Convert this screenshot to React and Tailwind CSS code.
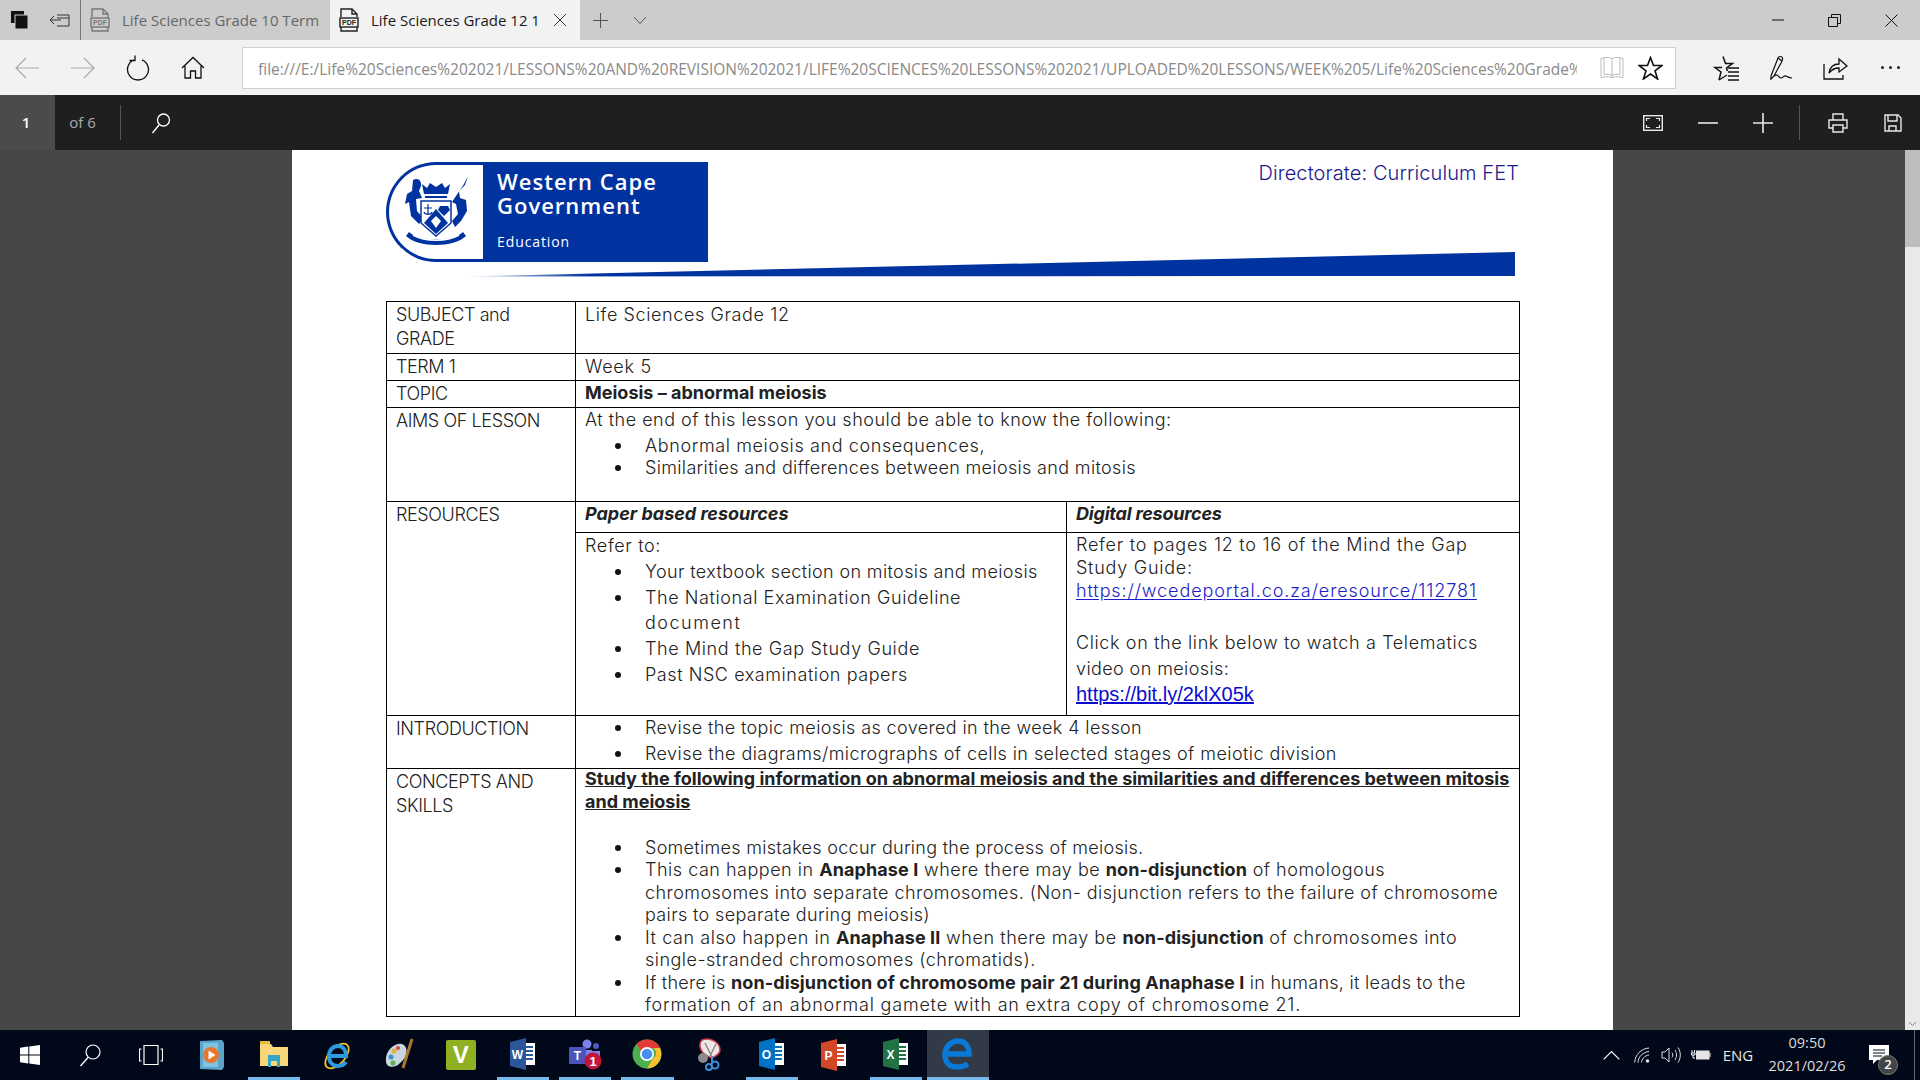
const Ico = ({ w = 24, h = 24, className = '', children }) => (
  <svg width={w} height={h} viewBox={`0 0 ${w} ${h}`} fill="none" stroke="currentColor" strokeWidth="1" className={className}>
    {children}
  </svg>
);

const PdfIcon = ({ className }) => (
  <svg width="20" height="24" viewBox="0 0 20 24" className={className} fill="none" stroke="currentColor" strokeWidth="1.4">
    <path d="M2 9V1h11l5 5v3M2 19v4h16v-4M13 1v5h5" />
    <rect x="1" y="10" width="18" height="9" fill="none" />
    <text x="10" y="17.2" textAnchor="middle" fontSize="7" fontWeight="700" fill="currentColor" stroke="none" fontFamily="Liberation Sans, sans-serif">PDF</text>
  </svg>
);

function TitleBar() {
  return (
    <div className="h-10 bg-[#cccccc] flex items-center text-[15px] font-['Open_Sans',sans-serif]">
      <div className="w-10 flex justify-center">
        <svg width="20" height="20" viewBox="0 0 20 20" fill="#111">
          <rect x="1" y="1" width="13" height="12" />
          <rect x="5" y="5" width="13" height="14" stroke="#ccc" strokeWidth="1" />
        </svg>
      </div>
      <div className="w-10 flex justify-center text-[#333]">
        <Ico w={22} h={20}>
          <path d="M8 5h12v11H8M8 8h12M1 10h11M5 6l-4 4 4 4" />
        </Ico>
      </div>
      <div className="h-10 w-[250px] border-l border-[#777] flex items-center text-[#666]">
        <PdfIcon className="ml-[9px] text-[#777]" />
        <span className="ml-[12px] whitespace-nowrap">Life Sciences Grade 10 Term</span>
      </div>
      <div className="h-10 w-[250px] bg-[#f2f2f2] flex items-center text-[#1a1a1a]">
        <PdfIcon className="ml-[9px] text-[#222]" />
        <span className="ml-[12px] w-[182px] whitespace-nowrap overflow-hidden">Life Sciences Grade 12 1</span>
        <Ico w={14} h={14} className="text-[#333]">
          <path d="M1 1l12 12M13 1L1 13" />
        </Ico>
      </div>
      <div className="w-10 flex justify-center text-[#555]">
        <Ico w={17} h={17}>
          <path d="M8.5 1v15M1 8.500h15" />
        </Ico>
      </div>
      <div className="w-10 flex justify-center text-[#555]">
        <Ico w={14} h={9}>
          <path d="M1 1l6 6.500L13 1" />
        </Ico>
      </div>
      <div className="flex-1" />
      <div className="w-[57px] flex justify-center text-[#111]">
        <Ico w={12} h={2}>
          <path d="M0 1h12" />
        </Ico>
      </div>
      <div className="w-[57px] flex justify-center text-[#111]">
        <Ico w={13} h={13}>
          <path d="M.5 3.500h9v9h-9zM3.500 3.500v-3h9v9h-3" />
        </Ico>
      </div>
      <div className="w-[57px] flex justify-center text-[#111]">
        <Ico w={13} h={13}>
          <path d="M.5.5l12 12M12.500.5l-12 12" />
        </Ico>
      </div>
    </div>
  );
}

function NavBar() {
  return (
    <div className="h-[55px] bg-[#f2f2f2] flex items-center">
      <div className="w-[55px] flex justify-center text-[#aaa]">
        <Ico w={25} h={22}>
          <path d="M24 11H1M11 1L1 11l10 10" strokeWidth="1.2" />
        </Ico>
      </div>
      <div className="w-[55px] flex justify-center text-[#aaa]">
        <Ico w={25} h={22}>
          <path d="M1 11h23M14 1l10 10-10 10" strokeWidth="1.2" />
        </Ico>
      </div>
      <div className="w-[55px] flex justify-center text-[#111]">
        <Ico w={24} h={26}>
          <path d="M8 4.800a10.500 10.500 0 1 0 8 0M9 .5v5H3.500" strokeWidth="1.3" />
        </Ico>
      </div>
      <div className="w-[55px] flex justify-center text-[#111]">
        <Ico w={24} h={24}>
          <path d="M1 12L12 1.500 23 12M4 10v12h5.500v-7h5v7H20V10" strokeWidth="1.3" />
        </Ico>
      </div>
      <div className="ml-[22px] h-[42px] w-[1434px] shrink-0 bg-white border border-[#cfcfcf] flex items-center text-[#8a8a8a] font-['Open_Sans',sans-serif] text-[15.500px]">
        <div className="ml-[15px] w-[1319px] shrink-0 overflow-hidden whitespace-nowrap leading-[30px] pt-[2px]">
          file:///E:/Life%20Sciences%202021/LESSONS%20AND%20REVISION%202021/LIFE%20SCIENCES%20LESSONS%202021/UPLOADED%20LESSONS/WEEK%205/Life%20Sciences%20Grade%2012
        </div>
        <div className="ml-[23px] text-[#bbb]">
          <Ico w={24} h={24}>
            <path d="M1 2.500c4-1.500 8-1.500 11 0 3-1.500 7-1.500 11 0v19c-4-1-8-1-11 0-3-1-7-1-11 0zM12 2.500v19M4 2v16.500c3-.5 6-.5 8 1 2-1.500 5-1.500 8-1V2" />
          </Ico>
        </div>
        <div className="ml-[14px] text-[#111]">
          <Ico w={25} h={24}>
            <path d="M12.500 1.500l3 8h8.500l-7 5.300 2.600 8.200-7.100-5-7.100 5 2.600-8.200-7-5.300h8.500z" strokeWidth="1.6" />
          </Ico>
        </div>
      </div>
      <div className="ml-[22px] w-[55px] flex justify-center text-[#111]">
        <Ico w={26} h={26}>
          <path d="M10 1.500l2.500 7h7l-6 4.500 1 3M6 25l2-8-6-4.500h7" strokeWidth="1.5" />
          <path d="M6 25l8-5M15 13h11M15 17h11M15 21h11M15 25h11" strokeWidth="1.3" />
        </Ico>
      </div>
      <div className="w-[55px] flex justify-center text-[#111]">
        <Ico w={24} h={26}>
          <path d="M2 21L9 3c1-2 4-2 4.500 0S13 6 12 8L5 21l-3 3zM9 3l4 3M1 24c3-1 5-5 7-4s2 3 4 3 3-3 5-2 3 2 6 2" strokeWidth="1.2" />
        </Ico>
      </div>
      <div className="w-[55px] flex justify-center text-[#111]">
        <Ico w={25} h={24}>
          <path d="M1 8v15h19v-4M6 17c1-6 5-9 10-9V3l8 7-8 6v-4c-4 0-7 1-10 5z" strokeWidth="1.3" />
        </Ico>
      </div>
      <div className="w-[55px] flex justify-center gap-[5px]">
        <span className="w-[3px] h-[3px] rounded-full bg-[#222]" />
        <span className="w-[3px] h-[3px] rounded-full bg-[#222]" />
        <span className="w-[3px] h-[3px] rounded-full bg-[#222]" />
      </div>
    </div>
  );
}

function PdfToolbar() {
  return (
    <div className="h-[55px] bg-[#1f1f1f] flex items-center text-white font-['Open_Sans',sans-serif]">
      <div className="w-[55px] h-full bg-[#4b4b4b] flex items-center justify-center text-[15px] font-semibold pr-[3px]">1</div>
      <div className="w-[66px] h-[35px] border-r border-[#555] flex items-center justify-center text-[15px] text-[#aaa] pr-[10px]">of 6</div>
      <div className="ml-[30px] text-white">
        <Ico w={20} h={22}>
          <circle cx="12.500" cy="8" r="6" strokeWidth="1.300" />
          <path d="M8 13L1.500 21" strokeWidth="1.400" />
        </Ico>
      </div>
      <div className="flex-1" />
      <div className="w-[55px] flex justify-center">
        <svg width="20" height="16" viewBox="0 0 20 16" fill="none" stroke="#e8e8e8">
          <rect x=".7" y=".7" width="18.600" height="14.600" strokeWidth="1.400" />
          <path d="M7 3.500H3.500V6M13 3.500h3.500V6M7 12.500H3.500V10M13 12.500h3.500V10" strokeWidth="1.200" />
        </svg>
      </div>
      <div className="w-[55px] flex justify-center">
        <Ico w={20} h={2}>
          <path d="M0 1h20" strokeWidth="1.600" stroke="#e8e8e8" />
        </Ico>
      </div>
      <div className="w-[55px] flex justify-center">
        <Ico w={20} h={20}>
          <path d="M0 10h20M10 0v20" strokeWidth="1.600" stroke="#e8e8e8" />
        </Ico>
      </div>
      <div className="w-[10px] h-[35px] border-r border-[#555]" />
      <div className="w-[10px]" />
      <div className="w-[55px] flex justify-center">
        <Ico w={20} h={20} className="text-[#e8e8e8]">
          <path d="M5 7V1h10v6M5 15H1V7h18v8h-4M5 12h10v7H5z" strokeWidth="1.400" />
        </Ico>
      </div>
      <div className="w-[55px] flex justify-center">
        <Ico w={18} h={18} className="text-[#e8e8e8]">
          <path d="M1 1h13l3 3v13H1zM4 1v6h9V1M5 17v-5h7v5" strokeWidth="1.400" />
        </Ico>
      </div>
    </div>
  );
}

function Crest() {
  return (
    <svg width="78" height="76" viewBox="0 0 78 76" fill="#0033a0">
      {/* crown */}
      <path d="M27 20l-2-10 5 4 3-5 6 4 6-4 3 5 5-4-2 10z" />
      <path d="M28 22h22v2H28z" />
      {/* lion left */}
      <path d="M16 6c5-3 9 1 8 6l-2 5 3 7-6 1 1 12 6 7-4 6-8-8-2-14-4 2 2-10 5-3z" />
      {/* gazelle right */}
      <path d="M71 2l-3 9-6 6 1 7 6 2 1 11-6 10-6 6-3-6 6-7-2-10-4-2 8-12 4-6z" />
      {/* shield */}
      <path d="M24 27h30v22L39 62 24 49z" fill="#fff" stroke="#0033a0" strokeWidth="1.500" />
      <path d="M39 35L27 49l12 11 12-11z" />
      <path d="M39 42l-5 5 5 7 5-7z" fill="#fff" />
      <path d="M31 30v11M27 34h8M27 38c1 3 7 3 8 0" stroke="#0033a0" fill="none" strokeWidth="1.200" />
      <path d="M43 32h8l2 4-6 6-6-6z" />
      {/* motto */}
      <path d="M12 58c10 10 44 10 54 0l3 4c-12 12-48 12-60 0z" />
      <path d="M16 61c12 7 34 7 46 0" stroke="#fff" fill="none" strokeWidth="1.500" />
    </svg>
  );
}

function Header() {
  return (
    <>
      <div className="pt-3 flex justify-between">
        <div className="h-[100px] w-[322px] flex text-white font-['Open_Sans',sans-serif]">
          <div className="w-[97px] h-full bg-white border-[3px] border-r-0 border-[#0033a0] rounded-l-[50px] flex items-center justify-center">
            <Crest />
          </div>
          <div className="flex-1 bg-[#0033a0] pl-[14px] pt-[7px]">
            <div className="text-[22px] font-semibold leading-[24px] tracking-[1px] whitespace-nowrap">Western Cape<br />Government</div>
            <div className="text-[14px] leading-[20px] mt-[15px] tracking-[0.9px]">Education</div>
          </div>
        </div>
        <div className="text-[20px] leading-[22px] text-[#1a1a8a] mr-[1px] font-[350] tracking-[0.1px]">Directorate: Curriculum FET</div>
      </div>
      <svg width="1052" height="25" viewBox="0 0 1052 25" className="ml-[78px] mt-[-10px] mb-[24px] block">
        <defs>
          <linearGradient id="sw" x1="0" x2="1">
            <stop offset="0" stopColor="#0033a0" stopOpacity="0.1" />
            <stop offset="0.12" stopColor="#0033a0" />
            <stop offset="1" stopColor="#0033a0" />
          </linearGradient>
        </defs>
        <path d="M0 24.500L1051 0v24z" fill="url(#sw)" />
      </svg>
    </>
  );
}

const B = ({ children }) => <span className="font-bold tracking-[0.1px]">{children}</span>;

const Bullet = ({ className = 'leading-[22px]', children }) => (
  <div className={`flex ${className}`}>
    <div className="w-[60px] flex justify-center shrink-0 pl-[6px]">
      <span className="self-center w-[6px] h-[6px] rounded-full bg-[#111] ml-[-1px]" />
    </div>
    <div className="whitespace-nowrap">{children}</div>
  </div>
);

const Left = ({ children }) => <div className="w-[189px] border-r border-black pl-[9px] leading-[24px] shrink-0 tracking-[-0.4px] pt-[1px]">{children}</div>;

function LessonTable() {
  return (
    <div className="w-[1134px] border border-black text-[#222] text-[18px] font-[350] font-['Inter',sans-serif] tracking-[0.3px]">
      <div className="flex h-[52px] border-b border-black">
        <Left>SUBJECT and<br />GRADE</Left>
        <div className="pl-[9px] leading-[25px] tracking-[0.6px]">Life Sciences Grade 12</div>
      </div>
      <div className="flex h-[27px] border-b border-black">
        <Left>TERM 1</Left>
        <div className="pl-[9px] leading-[25px] tracking-[0.7px]">Week 5</div>
      </div>
      <div className="flex h-[27px] border-b border-black">
        <Left>TOPIC</Left>
        <div className="pl-[9px] leading-[24px] font-bold tracking-[0px]">Meiosis – abnormal meiosis</div>
      </div>
      <div className="flex h-[94px] border-b border-black">
        <Left>AIMS OF LESSON</Left>
        <div className="pl-[9px]">
          <div className="leading-[24px] tracking-[0.49px]">At the end of this lesson you should be able to know the following:</div>
          <Bullet className="leading-[27px] tracking-[0.61px]">Abnormal meiosis and consequences,</Bullet>
          <Bullet className="leading-[17px] tracking-[0.34px]">Similarities and differences between meiosis and mitosis</Bullet>
        </div>
      </div>
      <div className="flex h-[214px] border-b border-black">
        <Left>RESOURCES</Left>
        <div className="flex-1">
          <div className="flex h-[31px] border-b border-black font-bold italic leading-[24px] tracking-[0px]">
            <div className="w-[491px] border-r border-black pl-[9px]">Paper based resources</div>
            <div className="pl-[9px] tracking-[-0.2px]">Digital resources</div>
          </div>
          <div className="flex h-[182px]">
            <div className="w-[491px] border-r border-black pl-[9px]">
              <div className="leading-[26px] tracking-[0.64px]">Refer to:</div>
              <Bullet className="leading-[26px] tracking-[0.37px]">Your textbook section on mitosis and meiosis</Bullet>
              <Bullet className="leading-[25px] tracking-[0.58px]">The National Examination Guideline</Bullet>
              <div className="pl-[60px] leading-[26px] tracking-[1.5px]">document</div>
              <Bullet className="leading-[26px] tracking-[0.61px]">The Mind the Gap Study Guide</Bullet>
              <Bullet className="leading-[26px] tracking-[0.56px]">Past NSC examination papers</Bullet>
            </div>
            <div className="pl-[9px] whitespace-nowrap">
              <div className="leading-[23px] tracking-[0.74px]">Refer to pages 12 to 16 of the Mind the Gap<br />Study Guide:</div>
              <div className="leading-[23px] text-[#1c1cc8] underline underline-offset-2 tracking-[0.9px]">https://wcedeportal.co.za/eresource/112781</div>
              <div className="leading-[26px] mt-[28px] tracking-[0.62px]">Click on the link below to watch a Telematics</div>
              <div className="leading-[26px] tracking-[0.4px]">video on meiosis:</div>
              <div className="leading-[25px] text-[20px] text-[#0b0bd0] underline font-['Liberation_Sans',sans-serif] tracking-normal">https://bit.ly/2klX05k</div>
            </div>
          </div>
        </div>
      </div>
      <div className="flex h-[53px] border-b border-black">
        <Left>INTRODUCTION</Left>
        <div className="pl-[9px]">
          <Bullet className="leading-[24px] tracking-[0.38px]">Revise the topic meiosis as covered in the week 4 lesson</Bullet>
          <Bullet className="leading-[26px] tracking-[0.43px] pt-[1px]">Revise the diagrams/micrographs of cells in selected stages of meiotic division</Bullet>
        </div>
      </div>
      <div className="flex h-[247px]">
        <Left>CONCEPTS AND<br />SKILLS</Left>
        <div className="pl-[9px] flex-1 whitespace-nowrap">
          <div className="font-bold underline leading-[23px] tracking-[0px] mt-[-2px]">Study the following information on abnormal meiosis and the similarities and differences between mitosis<br />and meiosis</div>
          <div className="h-[24px]" />
          <Bullet className="leading-[22px] tracking-[0.29px]">Sometimes mistakes occur during the process of meiosis.</Bullet>
          <Bullet className="leading-[22px] tracking-[0.51px]">This can happen in <B>Anaphase I</B> where there may be <B>non-disjunction</B> of homologous</Bullet>
          <div className="pl-[60px] leading-[23px] tracking-[0.45px]">chromosomes into separate chromosomes. (Non- disjunction refers to the failure of chromosome</div>
          <div className="pl-[60px] leading-[22px] tracking-[0.35px]">pairs to separate during meiosis)</div>
          <Bullet className="leading-[23px] tracking-[0.57px]">It can also happen in <B>Anaphase II</B> when there may be <B>non-disjunction</B> of chromosomes into</Bullet>
          <div className="pl-[60px] leading-[22px] tracking-[0.48px]">single-stranded chromosomes (chromatids).</div>
          <Bullet className="leading-[23px] tracking-[0.28px]">If there is <B>non-disjunction of chromosome pair 21 during Anaphase I</B> in humans, it leads to the</Bullet>
          <div className="pl-[60px] leading-[22px] tracking-[0.8px]">formation of an abnormal gamete with an extra copy of chromosome 21.</div>
        </div>
      </div>
    </div>
  );
}

function Scrollbar() {
  return (
    <div className="w-[15px] bg-[#e9e9e9] flex flex-col">
      <div className="h-[97px] bg-[#bdbdbd]" />
      <div className="flex-1" />
      <div className="h-[12px] flex items-center justify-center text-[#888]">
        <Ico w={9} h={6}>
          <path d="M1 1l3.500 3.500L8 1" />
        </Ico>
      </div>
    </div>
  );
}

const Office = ({ color, letter }) => (
  <svg width="28" height="32" viewBox="0 0 28 32">
    <rect x="14" y="5" width="12" height="22" fill="#fff" />
    <path d="M16 9h8M16 13h8M16 17h8M16 21h8" stroke={color} strokeWidth="2" />
    <path d="M1 4L17 0v32L1 28z" fill={color} />
    <text x="8.500" y="21" textAnchor="middle" fontSize="12" fontWeight="700" fill="#fff" fontFamily="Liberation Sans, sans-serif">{letter}</text>
  </svg>
);

const tasks = [
  {
    key: 'media',
    icon: (
      <svg width="24" height="30" viewBox="0 0 24 30">
        <path d="M0 1l22-1 2 3v24l-2 3-22-1z" fill="#5aa5c9" />
        <path d="M3 3h15v24H3z" fill="#7fc3de" />
        <circle cx="11" cy="15" r="8" fill="#e8772e" />
        <path d="M8.500 10.500l7 4.500-7 4.500z" fill="#fff" />
      </svg>
    ),
  },
  {
    key: 'explorer',
    active: true,
    icon: (
      <svg width="30" height="26" viewBox="0 0 30 26">
        <path d="M1 3h11l2 3h15v19H1z" fill="#f7d777" />
        <path d="M1 0h10v3H1z" fill="#e6b93f" />
        <path d="M9 14h12v12h-3v-6h-6v6H9z" fill="#36a3c9" />
      </svg>
    ),
  },
  {
    key: 'ie',
    icon: (
      <svg width="32" height="34" viewBox="0 0 32 34" fill="none" className="ml-[4px]">
        <ellipse cx="15" cy="18" rx="15" ry="8" transform="rotate(-48 15 18)" stroke="#f2c230" strokeWidth="1.800" />
        <path d="M7 18h17c0-6-3-10-8-10S7 12 7 18c0 6 3.500 10 9 10 3.500 0 6-1 8-4" stroke="#2a9be0" strokeWidth="4" />
      </svg>
    ),
  },
  {
    key: 'paint',
    icon: (
      <svg width="32" height="34" viewBox="0 0 32 34">
        <path d="M15 6C7 8 2 16 3 24c1 6 9 6 13 2 6-5 9-10 7-16-1-3-4-5-8-4z" fill="#c9d6de" />
        <circle cx="11" cy="13" r="2.500" fill="#e0b13a" />
        <circle cx="8" cy="19" r="2.500" fill="#3a8fd6" />
        <circle cx="15" cy="10" r="2" fill="#d94a3a" />
        <circle cx="10" cy="25" r="2.500" fill="#5ab04a" />
        <path d="M29 1l-9 29" stroke="#a9772f" strokeWidth="3" />
      </svg>
    ),
  },
  {
    key: 'v',
    icon: (
      <div className="w-[30px] h-[30px] bg-[#8fb021] rounded-[2px] flex items-center justify-center text-white font-bold text-[24px] font-['Liberation_Sans',sans-serif]">V</div>
    ),
  },
  { key: 'word', active: true, icon: <Office color="#2b579a" letter="W" /> },
  {
    key: 'teams',
    active: true,
    icon: (
      <svg width="34" height="32" viewBox="0 0 34 32">
        <circle cx="19" cy="6" r="4.500" fill="#7b83eb" />
        <circle cx="28" cy="8" r="3" fill="#5059c9" />
        <path d="M12 12h12v14H12zM24 13h8v10h-8z" fill="#7b83eb" />
        <rect x="1" y="9" width="17" height="17" fill="#4b53bc" rx="1" />
        <text x="9.500" y="22" textAnchor="middle" fontSize="12" fontWeight="700" fill="#fff" fontFamily="Liberation Sans, sans-serif">T</text>
        <circle cx="25" cy="23" r="8.500" fill="#c4143c" />
        <text x="25" y="28" textAnchor="middle" fontSize="13" fontWeight="700" fill="#fff" fontFamily="Liberation Sans, sans-serif">1</text>
      </svg>
    ),
  },
  {
    key: 'chrome',
    active: true,
    icon: (
      <svg width="30" height="30" viewBox="0 0 30 30">
        <circle cx="15" cy="15" r="14.500" fill="#4caf50" />
        <path d="M15 .5A14.500 14.500 0 0 1 28 9H15a6 6 0 0 0-5.500 3.500L4.500 5A14.500 14.500 0 0 1 15 .5z" fill="#e53935" />
        <path d="M28 9a14.500 14.500 0 0 1-13 20.500l6-10a6 6 0 0 0 0-10.500z" fill="#fbc02d" />
        <circle cx="15" cy="15" r="7" fill="#fff" />
        <circle cx="15" cy="15" r="5.300" fill="#4a8cf0" />
      </svg>
    ),
  },
  {
    key: 'snip',
    icon: (
      <svg width="28" height="34" viewBox="0 0 28 34">
        <path d="M6 2c8-3 18 2 18 10 0 4-4 6-8 8l-5-2C4 14 2 6 6 2z" fill="#f1e6e6" stroke="#c63a4a" strokeWidth="1.500" />
        <path d="M9 5l7 14M20 6l-6 12" stroke="#8a8a8a" strokeWidth="1.500" />
        <circle cx="7" cy="20" r="5" fill="#8a8a8a" />
        <circle cx="19" cy="27" r="3.500" fill="none" stroke="#3a8fd6" strokeWidth="2" />
        <circle cx="13" cy="29" r="3" fill="none" stroke="#3a8fd6" strokeWidth="2" />
        <path d="M16 18v7" stroke="#3a8fd6" strokeWidth="2" />
      </svg>
    ),
  },
  { key: 'outlook', active: true, icon: <Office color="#0072c6" letter="O" /> },
  { key: 'ppt', icon: <Office color="#d24726" letter="P" /> },
  { key: 'excel', active: true, icon: <Office color="#217346" letter="X" /> },
];

function Taskbar() {
  return (
    <div className="h-[50px] bg-[#01081a] flex text-white font-['Open_Sans',sans-serif]">
      <div className="w-[60px] flex items-center justify-center">
        <svg width="20" height="20" viewBox="0 0 20 20" fill="#fff">
          <path d="M0 2.800L8.300 1.600v7.900H0zM9.300 1.500L20 0v9.500H9.300zM0 10.500h8.300v7.900L0 17.200zM9.300 10.500H20V20L9.300 18.500z" />
        </svg>
      </div>
      <div className="w-[60px] flex items-center justify-center">
        <Ico w={22} h={24}>
          <circle cx="14" cy="9" r="7" strokeWidth="1.200" />
          <path d="M9 14.500L1.500 23" strokeWidth="1.300" />
        </Ico>
      </div>
      <div className="w-[61px] flex items-center justify-center">
        <Ico w={24} h={20}>
          <path d="M5 .5h14v19H5zM2.500 4H.5v12h2M21.500 4h2v12h-2" strokeWidth="1.200" />
        </Ico>
      </div>
      {tasks.map((t) => (
        <div key={t.key} className={t.active ? 'w-[52.200px] mx-[5px] flex items-center justify-center border-b-[3px] border-[#76b9ed]' : 'w-[62.200px] flex items-center justify-center'}>
          {t.icon}
        </div>
      ))}
      <div className="w-[62px] bg-[#333a47] border-b-[3px] border-[#76b9ed] flex items-center justify-center">
        <svg width="32" height="32" viewBox="0 0 32 32" fill="none">
          <path d="M4 16h23c0-8-4-13-11-13S3 9 3 17c0 8 5 12 12 12 4 0 8-1 11-3" stroke="#0a78d7" strokeWidth="5.500" />
        </svg>
      </div>
      <div className="flex-1" />
      <div className="flex items-center text-[15px]">
        <div className="w-[31px] flex justify-center">
          <Ico w={17} h={10}>
            <path d="M.7 9.300L8.500 1.500l7.800 7.800" strokeWidth="1.200" />
          </Ico>
        </div>
        <div className="w-[30px] flex justify-center text-[#ddd]">
          <Ico w={16} h={16}>
            <path d="M.7 15.500C1 8 7 1.500 15 1M4 15.500C4 10 9 5 15 4.500M7.500 15.500c0-3 3-7 7.500-7.500" />
            <circle cx="13.500" cy="14" r="1.800" fill="currentColor" stroke="none" />
          </Ico>
        </div>
        <div className="w-[29px] flex justify-center text-[#ddd]">
          <Ico w={21} h={16}>
            <path d="M1 5h3l4-4v14l-4-4H1zM11 5.500c1 1.500 1 3.500 0 5M14 3c2 3 2 7 0 10M17 .5c3 4 3 11 0 15" />
          </Ico>
        </div>
        <div className="w-[30px] flex justify-center">
          <svg width="20" height="12" viewBox="0 0 20 12">
            <path d="M1 1v3M3.500 1v3M.5 4h3.500v2H.5zM2 6v3h2" stroke="#fff" fill="none" />
            <rect x="5" y="1.500" width="13.500" height="9" fill="#e6e6e6" />
            <path d="M19 4v4" stroke="#fff" />
          </svg>
        </div>
        <div className="w-[44px] text-center text-[#e8e8e8]">ENG</div>
      </div>
      <div className="w-[94px] text-center text-[#ddd] text-[14.500px] leading-[23px] pt-[1px]">
        09:50<br />2021/02/26
      </div>
      <div className="w-[60px] flex items-center justify-center relative pr-[10px]">
        <svg width="21" height="20" viewBox="0 0 21 20">
          <path d="M0 0h20v15H8l-4 4v-4H0z" fill="#fff" />
          <path d="M4 5h12M4 8h12M4 11h9" stroke="#01081a" />
        </svg>
        <div className="absolute left-[24px] top-[25px] w-[20px] h-[20px] rounded-full bg-[#444] border border-[#777] flex items-center justify-center text-[13px] font-semibold">2</div>
      </div>
      <div className="w-[6px] border-l border-[#666]" />
    </div>
  );
}

export default function App() {
  return (
    <div className="w-[1920px] h-[1080px] flex flex-col overflow-hidden font-['Inter',sans-serif]">
      <TitleBar />
      <NavBar />
      <PdfToolbar />
      <div className="h-[880px] bg-[#474747] flex">
        <div className="w-[292px]" />
        <div className="w-[1321px] bg-white pl-[94px] overflow-hidden">
          <div className="w-[1134px]">
            <Header />
            <LessonTable />
          </div>
        </div>
        <div className="flex-1" />
        <Scrollbar />
      </div>
      <Taskbar />
    </div>
  );
}
